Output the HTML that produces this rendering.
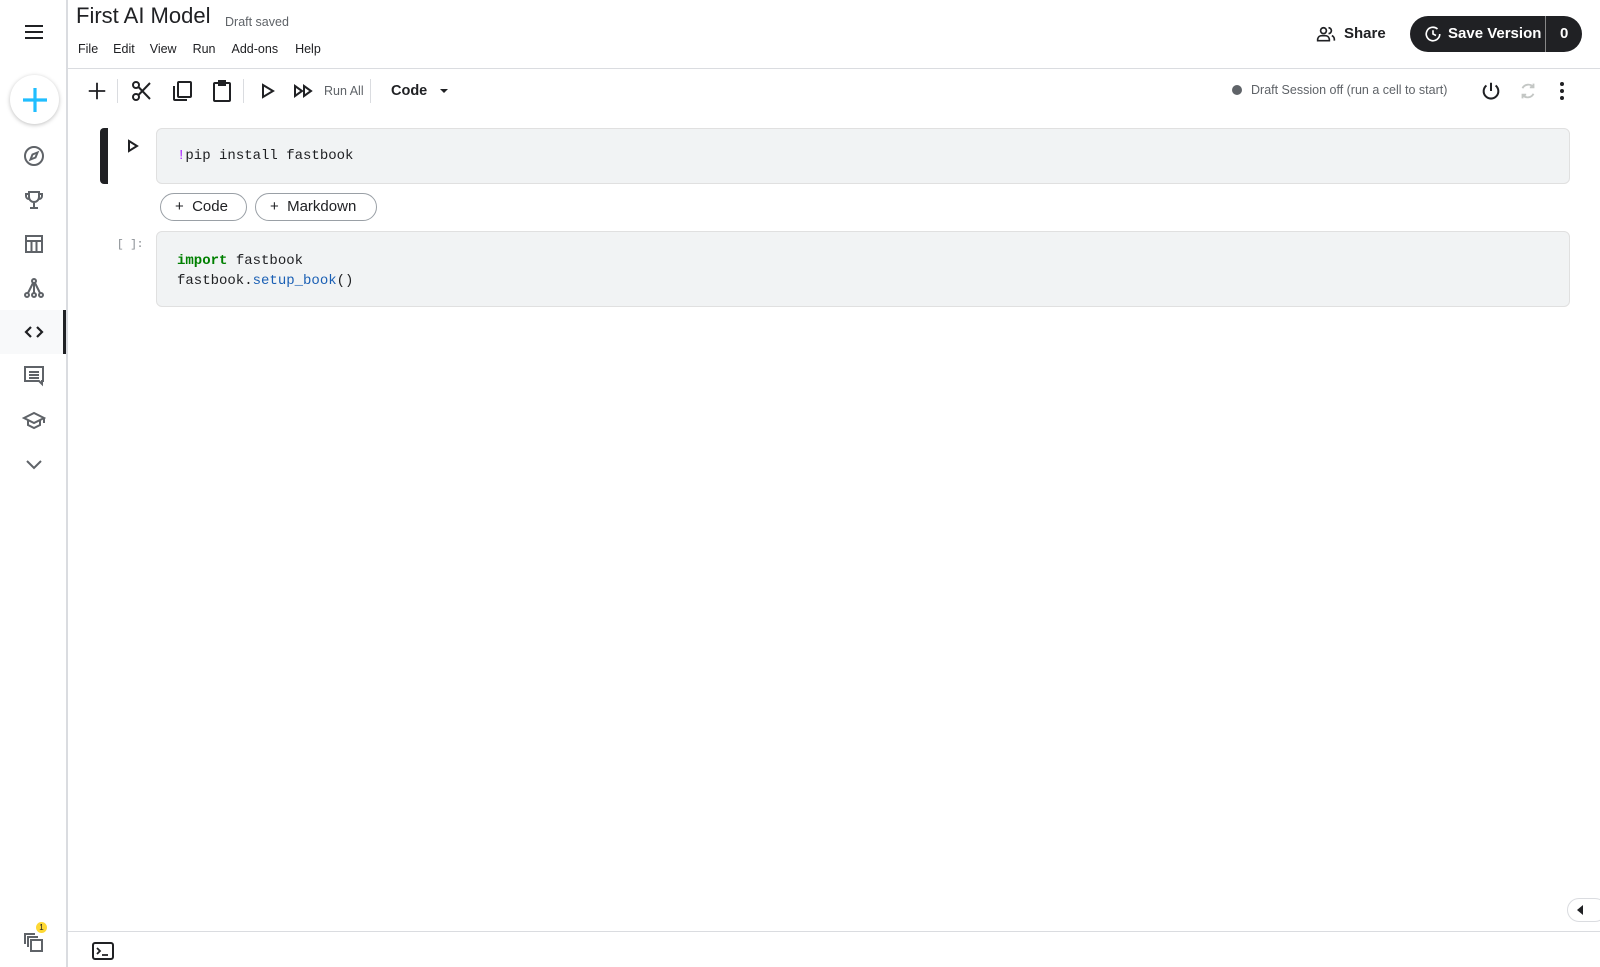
<!DOCTYPE html>
<html><head><meta charset="utf-8"><style>
*{box-sizing:border-box;margin:0;padding:0}
body{width:1600px;height:967px;background:#fff;font-family:"Liberation Sans",sans-serif;color:#202124;position:relative;overflow:hidden}
.abs{position:absolute}
.side{left:0;top:0;width:68px;height:967px;border-right:2px solid #dadce0}
.ic{position:absolute;left:22px;width:24px;height:24px}
svg{display:block}
.mono{font-family:"Liberation Mono",monospace;font-size:14px;color:#202124}
.pill{position:absolute;height:28px;border:1px solid #9aa0a6;border-radius:14px;font-size:15px;line-height:26px;padding:0 14px}
.cell{position:absolute;left:156px;right:30px;background:#f1f3f4;border:1px solid #e0e0e0;border-radius:6px}
</style></head><body>
<div class="abs side">
 <svg class="ic" style="top:20px" viewBox="0 0 24 24"><path d="M3 6h18M3 12h18M3 18h18" stroke="#202124" stroke-width="2"/></svg>
 <div class="abs" style="left:10px;top:75px;width:49px;height:49px;border-radius:50%;background:#fff;box-shadow:0 1px 4px rgba(0,0,0,.25)"></div>
 <svg class="abs" style="left:21px;top:86px" width="28" height="28" viewBox="0 0 28 28"><path d="M14 2v24M2 14h24" stroke="#20beff" stroke-width="3.2"/></svg>
 <svg class="ic" style="top:144px" viewBox="0 0 24 24" fill="none" stroke="#5f6368" stroke-width="2"><circle cx="12" cy="12" r="9"/><path d="M15.5 8.5l-2 5-5 2 2-5z"/></svg>
 <svg class="ic" style="top:188px" viewBox="0 0 24 24" fill="none" stroke="#5f6368" stroke-width="2"><path d="M7 4h10v5a5 5 0 0 1-10 0zM7 6H4v2a3 3 0 0 0 3 3M17 6h3v2a3 3 0 0 1-3 3M12 14v5M8 20h8"/></svg>
 <svg class="ic" style="top:232px" viewBox="0 0 24 24" fill="none" stroke="#5f6368" stroke-width="2"><rect x="4" y="4" width="16" height="16"/><path d="M4 9h16M9.5 9v11M14.5 9v11"/></svg>
 <svg class="ic" style="top:276px" viewBox="0 0 24 24" fill="none" stroke="#5f6368" stroke-width="2"><circle cx="12" cy="5" r="2"/><circle cx="5" cy="19" r="2"/><circle cx="12" cy="19" r="2"/><circle cx="19" cy="19" r="2"/><path d="M11 7l-5 10M13 7l5 10M12 7v10"/></svg>
 <div class="abs" style="left:0;top:310px;width:66px;height:44px;background:#f8f9fa;border-right:3px solid #202124"></div>
 <svg class="ic" style="top:320px" viewBox="0 0 24 24" fill="none" stroke="#202124" stroke-width="2.2"><path d="M9 7l-5 5 5 5M15 7l5 5-5 5"/></svg>
 <svg class="ic" style="top:364px" viewBox="0 0 24 24" fill="none" stroke="#5f6368" stroke-width="2"><path d="M3 3h18v14h-1v3l-3-3H3z"/><path d="M7 8h10M7 11h10M7 14h10"/></svg>
 <svg class="ic" style="top:408px" viewBox="0 0 24 24" fill="none" stroke="#5f6368" stroke-width="2"><path d="M2 10l10-5 10 5-10 5z"/><path d="M6 12v5l6 3 6-3v-5M22 10v5"/></svg>
 <svg class="ic" style="top:452px" viewBox="0 0 24 24" fill="none" stroke="#5f6368" stroke-width="2"><path d="M5 9l7 7 7-7"/></svg>
 <svg class="ic" style="top:930px" viewBox="0 0 24 24" fill="none" stroke="#5f6368" stroke-width="2"><path d="M3 14V4h10"/><path d="M6 17V7h10"/><rect x="9" y="10" width="11" height="11"/></svg>
 <div class="abs" style="left:36px;top:922px;width:11px;height:11px;border-radius:50%;background:#fdd835;font-size:8px;text-align:center;line-height:11px">1</div>
</div>
<div class="abs" style="left:76px;top:3px;font-size:22px;color:#202124">First AI Model</div>
<div class="abs" style="left:225px;top:15px;font-size:12.5px;color:#5f6368">Draft saved</div>
<div class="abs" style="left:78px;top:42px;font-size:12.5px;word-spacing:0">
<span style="margin-right:15px">File</span><span style="margin-right:15px">Edit</span><span style="margin-right:16px">View</span><span style="margin-right:16px">Run</span><span style="margin-right:17px">Add-ons</span><span>Help</span></div>
<div class="abs" style="left:68px;right:0;top:68px;border-top:1px solid #dadce0"></div>
<svg class="abs" style="left:1316px;top:24px" width="20" height="20" viewBox="0 0 24 24" fill="none" stroke="#202124" stroke-width="2"><circle cx="9" cy="8" r="3.5"/><path d="M2 20v-2a5 5 0 0 1 5-4h4a5 5 0 0 1 5 4v2zM15 4.5a3.5 3.5 0 0 1 0 7M19 14a5 5 0 0 1 3 4v2"/></svg>
<div class="abs" style="left:1344px;top:25px;font-size:15px;font-weight:bold">Share</div>
<div class="abs" style="left:1410px;top:16px;width:172px;height:36px;border-radius:18px;background:#202124;color:#fff;font-weight:bold;font-size:15px;line-height:36px">
 <svg class="abs" style="left:14px;top:9px" width="18" height="18" viewBox="0 0 24 24" fill="none" stroke="#fff" stroke-width="2.2"><path d="M21 12a9 9 0 1 1-3-6.7"/><path d="M12 7v5l4 2"/></svg>
 <span class="abs" style="left:38px">Save Version</span>
 <div class="abs" style="left:135px;top:0;height:36px;border-left:1px solid #888"></div>
 <span class="abs" style="left:150px">0</span>
</div>
<svg class="abs" style="left:86px;top:80px" width="22" height="22" viewBox="0 0 24 24"><path d="M12 3v18M3 12h18" stroke="#202124" stroke-width="2"/></svg>
<div class="abs" style="left:117px;top:79px;height:24px;border-left:1px solid #dadce0"></div>
<svg class="abs" style="left:130px;top:79px" width="24" height="24" viewBox="0 0 24 24" fill="none" stroke="#202124" stroke-width="2"><circle cx="6" cy="6" r="3"/><circle cx="6" cy="18" r="3"/><path d="M8.5 8L20 20M8.5 16L20 4"/></svg>
<svg class="abs" style="left:170px;top:79px" width="24" height="24" viewBox="0 0 24 24" fill="none" stroke="#202124" stroke-width="2"><rect x="8" y="3" width="13" height="15" rx="1"/><path d="M4 7v13a1 1 0 0 0 1 1h12"/></svg>
<svg class="abs" style="left:210px;top:78px" width="24" height="25" viewBox="0 0 24 25" fill="none" stroke="#202124" stroke-width="2"><rect x="4" y="5" width="16" height="18" rx="1"/><path d="M9 3h6v4H9z" fill="#202124"/></svg>
<div class="abs" style="left:243px;top:79px;height:24px;border-left:1px solid #dadce0"></div>
<svg class="abs" style="left:260px;top:83px" width="16" height="16" viewBox="0 0 16 16" fill="none" stroke="#202124" stroke-width="2"><path d="M3 2l10 6-10 6z"/></svg>
<svg class="abs" style="left:293px;top:84px" width="20" height="14" viewBox="0 0 20 14" fill="none" stroke="#202124" stroke-width="2"><path d="M2 2l7 5-7 5zM11 2l7 5-7 5z"/></svg>
<div class="abs" style="left:324px;top:84px;font-size:12.5px;color:#5f6368">Run All</div>
<div class="abs" style="left:370px;top:79px;height:24px;border-left:1px solid #dadce0"></div>
<div class="abs" style="left:391px;top:83px;font-size:14.5px;font-weight:bold">Code</div>
<svg class="abs" style="left:439px;top:88px" width="10" height="6" viewBox="0 0 10 6"><path d="M1 1h8L5 5z" fill="#202124"/></svg>
<div class="abs" style="left:1232px;top:85px;width:10px;height:10px;border-radius:50%;background:#5f6368"></div>
<div class="abs" style="left:1251px;top:83px;font-size:12.5px;color:#5f6368">Draft Session off (run a cell to start)</div>
<svg class="abs" style="left:1480px;top:80px" width="22" height="22" viewBox="0 0 24 24" fill="none" stroke="#202124" stroke-width="2.2"><path d="M12 3v9M7 6a8 8 0 1 0 10 0"/></svg>
<svg class="abs" style="left:1517px;top:80px" width="22" height="22" viewBox="0 0 24 24" fill="none" stroke="#c4c7c5" stroke-width="2"><path d="M18 8a7 7 0 0 0-12 1M6 16a7 7 0 0 0 12-1M18 4v4h-4M6 20v-4h4"/></svg>
<svg class="abs" style="left:1558px;top:81px" width="8" height="20" viewBox="0 0 8 20" fill="#202124"><circle cx="4" cy="3" r="2"/><circle cx="4" cy="10" r="2"/><circle cx="4" cy="17" r="2"/></svg>
<div class="abs" style="left:100px;top:128px;width:8px;height:56px;background:#202124;border-radius:4px 0 0 4px"></div>
<svg class="abs" style="left:127px;top:139px" width="12" height="14" viewBox="0 0 12 14" fill="none" stroke="#202124" stroke-width="2"><path d="M2 2l8 5-8 5z"/></svg>
<div class="cell" style="top:128px;height:56px"><div class="mono abs" style="left:20px;top:19px"><span style="color:#aa22ff">!</span>pip install fastbook</div></div>
<div class="pill" style="left:160px;top:193px;width:87px">+&nbsp; Code</div>
<div class="pill" style="left:255px;top:193px;width:122px">+&nbsp; Markdown</div>
<div class="abs mono" style="left:117px;top:239px;font-size:11px;color:#80868b">[ ]:</div>
<div class="cell" style="top:231px;height:76px"><div class="mono abs" style="left:20px;top:19px;line-height:20px"><span style="color:#008000;font-weight:bold">import</span> fastbook<br>fastbook.<span style="color:#1a5fb4">setup_book</span>()</div></div>
<div class="abs" style="left:1567px;top:898px;width:40px;height:24px;border:1px solid #dadce0;border-radius:12px;background:#fff"></div>
<svg class="abs" style="left:1576px;top:904px" width="8" height="12" viewBox="0 0 8 12"><path d="M7 1v10L1 6z" fill="#202124"/></svg>
<div class="abs" style="left:68px;right:0;top:931px;border-top:1px solid #dadce0"></div>
<svg class="abs" style="left:92px;top:942px" width="22" height="18" viewBox="0 0 22 18"><rect x="1" y="1" width="20" height="16" rx="2" fill="none" stroke="#202124" stroke-width="2"/><path d="M5 6l3 3-3 3M10 13h6" stroke="#202124" stroke-width="1.8" fill="none"/></svg>
</body></html>
